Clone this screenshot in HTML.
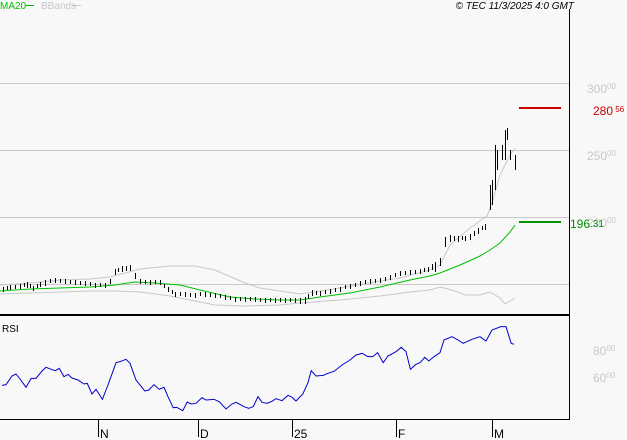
<!DOCTYPE html>
<html><head><meta charset="utf-8"><style>
html,body{margin:0;padding:0;background:#f8f8f8;}
body{width:627px;height:440px;overflow:hidden;position:relative;font-family:"Liberation Sans",sans-serif;}
svg{position:absolute;left:0;top:0;}
</style></head><body>
<svg width="627" height="440" viewBox="0 0 627 440" font-family="Liberation Sans, sans-serif">
<rect width="627" height="440" fill="#f8f8f8"/>
<g stroke="#c8c8c8" stroke-width="1">
<line x1="0" y1="83.5" x2="569" y2="83.5"/>
<line x1="0" y1="150.5" x2="569" y2="150.5"/>
<line x1="0" y1="217.5" x2="569" y2="217.5"/>
<line x1="0" y1="284.5" x2="569" y2="284.5"/>
</g>
<line x1="569.5" y1="9" x2="569.5" y2="420" stroke="#000" stroke-width="1"/>
<line x1="0" y1="315" x2="569" y2="315" stroke="#000" stroke-width="2"/>
<line x1="0" y1="419.5" x2="569" y2="419.5" stroke="#000" stroke-width="1"/>
<g stroke="#000" stroke-width="1">
<line x1="98.5" y1="420" x2="98.5" y2="437"/>
<line x1="198.5" y1="420" x2="198.5" y2="437"/>
<line x1="292.5" y1="420" x2="292.5" y2="437"/>
<line x1="396.5" y1="420" x2="396.5" y2="437"/>
<line x1="492.5" y1="420" x2="492.5" y2="437"/>
</g>
<g font-size="12" fill="#000">
<text x="100" y="438">N</text><text x="200" y="438">D</text><text x="294" y="438">25</text><text x="398" y="438">F</text><text x="494" y="438">M</text>
</g>
<g fill="none" stroke="#c8c8c8" stroke-width="1">
<polyline points="0,285 30,283 60,280 90,279 110,277 140,269 170,266 195,266 215,270 245,283 260,288 300,294 340,288 380,281 400,278 430,270 440,265 450,245 470,228 487,216 493,200 500,175 510,155 515,148"/>
<polyline points="0,294 30,293 60,292 90,291 115,291 140,292 170,296 190,300 215,305 245,306 280,305 300,303 340,300 380,296 410,292 430,290 440,287 452,290 465,295 480,295 490,292 500,298 505,304 512,300 515,298"/>
</g>
<polyline fill="none" stroke="#00c000" stroke-width="1" points="0,291 30,289 60,288 90,287 115,285 135,282 155,283 180,285 200,290 230,297 255,299 280,300 300,300 320,297 350,293 380,287 410,280 430,276 440,273 460,265 480,256 490,250 500,243 510,232 515,225"/>
<g transform="translate(0.5,0)" shape-rendering="crispEdges">
<path fill="none" stroke="#000" stroke-width="1" d="M3,287v5M7,286v4M10,285v5M15,285v4M20,284v5M24,283v4M27,282v6M30,284v4M33,286v5M37,284v4M40,282v5M45,280v6M50,279v4M55,278v5M60,279v4M65,279v5M70,280v4M75,280v5M80,281v4M85,281v5M90,282v4M95,283v5M100,283v4M105,283v5M110,279v5M115,269v6M118,268v4M122,266v6M126,266v5M130,265v6M135,273v6M140,279v5M145,280v4M150,280v5M155,280v4M160,280v5M164,284v4M168,287v5M172,290v4M175,292v5M180,292v4M185,292v5M190,293v4M195,293v5M200,292v4M205,292v5M210,293v4M215,293v5M220,294v4M225,295v5M230,296v4M235,297v5M240,297v4M245,297v5M250,297v4M255,297v5M260,298v4M265,298v5M270,298v4M275,298v5M280,298v4M285,298v5M290,298v4M295,298v5M300,298v6M305,297v7M308,294v5M312,290v6M316,291v4M320,291v5M325,290v4M330,289v5M335,288v4M340,287v5M345,285v4M350,284v5M355,283v4M360,281v5M365,280v4M370,279v5M375,279v4M380,278v5M385,277v4M390,275v5M395,273v4M400,271v5M405,271v4M410,270v5M415,270v4M420,269v5M424,268v4M428,267v5M432,264v6M435,262v10M440,258v8M445,237v10M450,235v7M454,236v5M458,236v6M462,236v4M465,236v5M470,234v6M474,231v5M478,228v6M482,226v4M485,224v6M490,185v25M492,180v25M495,145v45M497,150v20M502,145v15M505,130v30M507,128v12M510,150v10M515,155v15"/>
</g>
<line x1="519" y1="108" x2="561" y2="108" stroke="#cc0000" stroke-width="2"/>
<line x1="519" y1="222" x2="561" y2="222" stroke="#009000" stroke-width="2"/>
<g fill="#c8c8c8" font-size="12">
<text x="587" y="93">300<tspan font-size="8" dy="-4">00</tspan></text>
<text x="587" y="160">250<tspan font-size="8" dy="-4">00</tspan></text>
<text x="587" y="227">200<tspan font-size="8" dy="-4">00</tspan></text>
<text x="593" y="355">80<tspan font-size="8" dy="-4">00</tspan></text>
<text x="593" y="382">60<tspan font-size="8" dy="-4">00</tspan></text>
</g>
<text x="593" y="115" fill="#cc0000" font-size="12">280<tspan font-size="8" dy="-3"> 56</tspan></text>
<text x="570" y="228" fill="#009000" font-size="12">196<tspan font-size="10" dy="-1">.31</tspan></text>
<text x="0" y="9" fill="#00c000" font-size="10">MA20</text>
<line x1="25" y1="5.5" x2="34" y2="5.5" stroke="#00c000"/>
<text x="41" y="9" fill="#c8c8c8" font-size="10">BBands</text>
<line x1="72" y1="5.5" x2="81" y2="5.5" stroke="#c8c8c8"/>
<text x="574" y="9" fill="#000" font-size="10" font-style="italic" text-anchor="end">© TEC 11/3/2025 4:0 GMT</text>
<text x="2" y="332" fill="#000" font-size="10">RSI</text>
<g transform="translate(0,310) scale(0.4,0.33333)">
<polyline fill="none" stroke="#0000cc" stroke-width="1" vector-effect="non-scaling-stroke" points="5,226 15,224 30,198 40,192 52,210 65,232 78,205 90,205 105,183 115,172 128,178 138,182 148,175 160,200 170,193 180,204 195,210 210,222 218,220 230,252 240,238 256,268 270,225 290,158 300,155 315,148 325,160 340,210 350,225 362,243 372,240 385,224 398,238 410,232 420,260 433,293 442,292 457,302 468,276 478,282 490,280 505,263 515,270 535,268 548,275 565,297 580,282 590,277 610,290 622,295 633,290 645,260 655,277 668,280 680,274 690,266 705,272 720,256 730,262 740,273 757,252 770,218 778,182 790,198 808,196 820,190 835,184 855,165 875,150 890,135 905,130 920,140 932,140 944,128 958,158 970,138 990,125 1003,112 1015,125 1026,178 1040,163 1050,158 1062,142 1072,153 1085,140 1100,128 1110,90 1130,80 1145,90 1158,100 1180,88 1200,80 1215,93 1230,60 1252,50 1265,50 1278,100 1285,103"/>
</g>
</svg>
</body></html>
